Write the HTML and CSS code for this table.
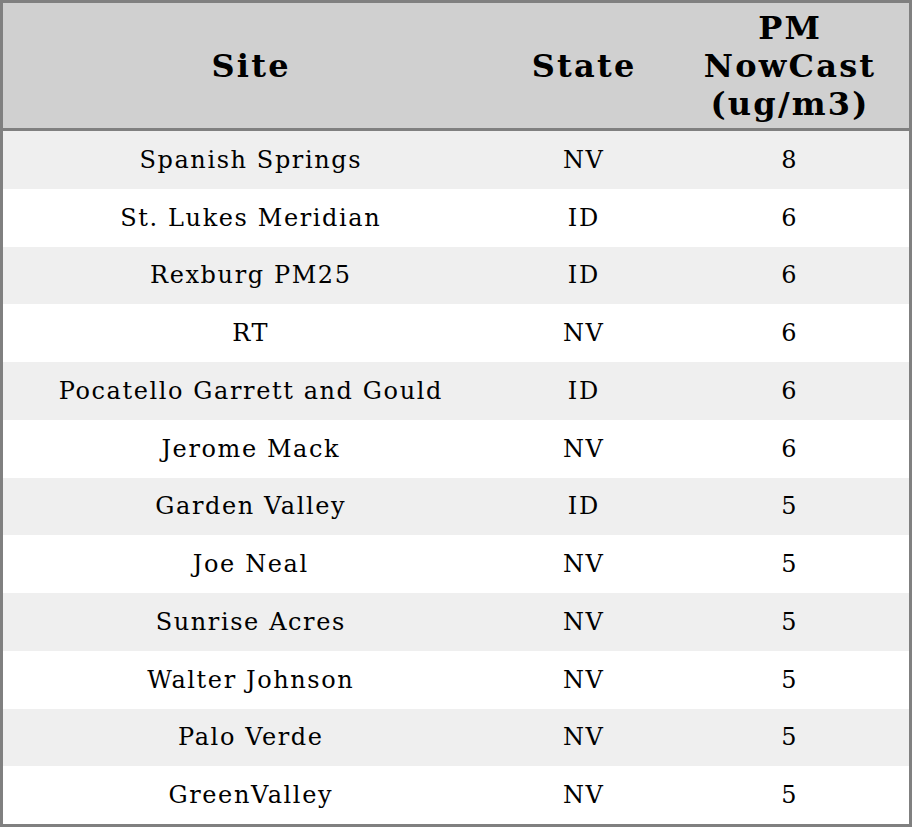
FILE: index.html
```html
<!DOCTYPE html>
<html>
<head>
<meta charset="utf-8">
<link rel="stylesheet" href="styles.css">
</head>
<body>
<table class="aq">
<colgroup><col class="c-site"><col class="c-state"><col class="c-pm"></colgroup>
<thead>
<tr><th>Site</th><th>State</th><th>PM<br>NowCast<br>(ug/m3)</th></tr>
</thead>
<tbody>
<tr><td>Spanish Springs</td><td>NV</td><td>8</td></tr>
<tr><td>St. Lukes Meridian</td><td>ID</td><td>6</td></tr>
<tr><td>Rexburg PM25</td><td>ID</td><td>6</td></tr>
<tr><td>RT</td><td>NV</td><td>6</td></tr>
<tr><td>Pocatello Garrett and Gould</td><td>ID</td><td>6</td></tr>
<tr><td>Jerome Mack</td><td>NV</td><td>6</td></tr>
<tr><td>Garden Valley</td><td>ID</td><td>5</td></tr>
<tr><td>Joe Neal</td><td>NV</td><td>5</td></tr>
<tr><td>Sunrise Acres</td><td>NV</td><td>5</td></tr>
<tr><td>Walter Johnson</td><td>NV</td><td>5</td></tr>
<tr><td>Palo Verde</td><td>NV</td><td>5</td></tr>
<tr><td>GreenValley</td><td>NV</td><td>5</td></tr>
</tbody>
</table>
</body>
</html>
```
FILE: styles.css
```css
html, body {
  margin: 0;
  padding: 0;
  background: #ffffff;
}
.aq {
  width: 912px;
  border-collapse: collapse;
  border: 3px solid #808080;
  font-family: "DejaVu Serif", serif;
  color: #000;
  table-layout: fixed;
}
.c-site { width: 495.5px; }
.c-state { width: 172px; }
.c-pm { width: 241.5px; }
.aq th {
  background: #d0d0d0;
  font-size: 32px;
  font-weight: bold;
  letter-spacing: 2.2px;
  line-height: 38px;
  height: 125px;
  padding: 0 0 0 2.2px;
  text-align: center;
  vertical-align: middle;
  border-bottom: 3px solid #808080;
}
.aq td {
  font-size: 24px;
  letter-spacing: 1.6px;
  height: 57.75px;
  padding: 0 0 0 1.6px;
  text-align: center;
  vertical-align: middle;
}
.aq tbody tr:nth-child(odd) td {
  background: #efefef;
}
```
